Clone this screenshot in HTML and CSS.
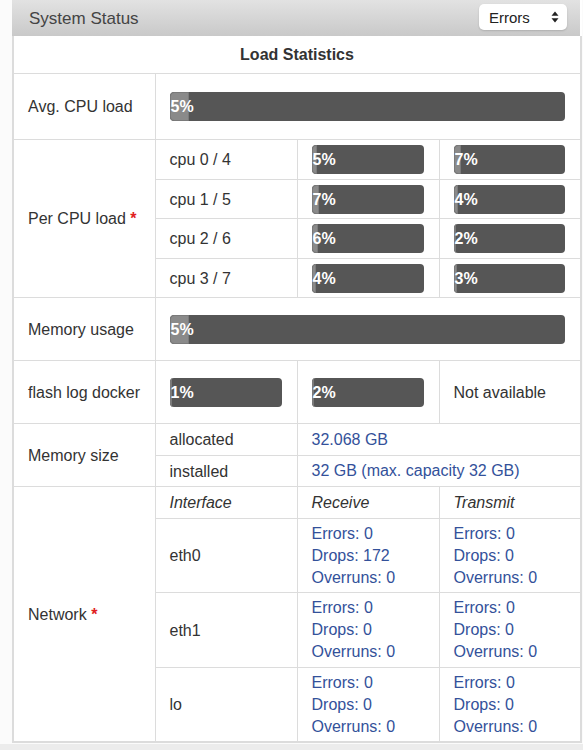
FILE: index.html
```html
<!DOCTYPE html>
<html lang="en">
<head>
    <meta charset="UTF-8">
    <meta name="viewport" content="width=device-width, initial-scale=1.0">
    <title>System Status</title>
    <link rel="stylesheet" href="styles.css">
</head>
<body>
    <div class="page">
        <div class="panel">
            <div class="panel-head">
                <span class="panel-title">System Status</span>
                <div class="select">
                    <span>Errors</span>
                    <svg class="select-arrows" width="8" height="12" viewBox="0 0 8 12">
                        <path d="M4 0.5 L7.5 4.8 L0.5 4.8 Z" fill="#222"/>
                        <path d="M4 11.5 L7.5 7.2 L0.5 7.2 Z" fill="#222"/>
                    </svg>
                </div>
            </div>
            <table class="stats">
                <colgroup>
                    <col class="c1"><col class="c2"><col class="c3"><col class="c4">
                </colgroup>
                <tr>
                    <th colspan="4" class="title">Load Statistics</th>
                </tr>
                <tr>
                    <td class="label taller">Avg. CPU load</td>
                    <td colspan="3" class="bar-cell taller">
                        <div class="bar"><div class="fill" style="width:5%"></div><span>5%</span></div>
                    </td>
                </tr>
                <tr>
                    <td rowspan="4" class="label">Per CPU load <span class="req">*</span></td>
                    <td class="sub">cpu 0 / 4</td>
                    <td class="bar-cell"><div class="bar"><div class="fill" style="width:5%"></div><span>5%</span></div></td>
                    <td class="bar-cell"><div class="bar"><div class="fill" style="width:7%"></div><span>7%</span></div></td>
                </tr>
                <tr>
                    <td class="sub">cpu 1 / 5</td>
                    <td class="bar-cell"><div class="bar"><div class="fill" style="width:7%"></div><span>7%</span></div></td>
                    <td class="bar-cell"><div class="bar"><div class="fill" style="width:4%"></div><span>4%</span></div></td>
                </tr>
                <tr>
                    <td class="sub">cpu 2 / 6</td>
                    <td class="bar-cell"><div class="bar"><div class="fill" style="width:6%"></div><span>6%</span></div></td>
                    <td class="bar-cell"><div class="bar"><div class="fill" style="width:2%"></div><span>2%</span></div></td>
                </tr>
                <tr>
                    <td class="sub">cpu 3 / 7</td>
                    <td class="bar-cell"><div class="bar"><div class="fill" style="width:4%"></div><span>4%</span></div></td>
                    <td class="bar-cell"><div class="bar"><div class="fill" style="width:3%"></div><span>3%</span></div></td>
                </tr>
                <tr>
                    <td class="label tall">Memory usage</td>
                    <td colspan="3" class="bar-cell tall">
                        <div class="bar"><div class="fill" style="width:5%"></div><span>5%</span></div>
                    </td>
                </tr>
                <tr>
                    <td class="label tall">flash log docker</td>
                    <td class="bar-cell tall"><div class="bar"><div class="fill" style="width:1%"></div><span>1%</span></div></td>
                    <td class="bar-cell tall"><div class="bar"><div class="fill" style="width:2%"></div><span>2%</span></div></td>
                    <td class="sub">Not available</td>
                </tr>
                <tr>
                    <td rowspan="2" class="label">Memory size</td>
                    <td class="sub">allocated</td>
                    <td colspan="2" class="sub link">32.068 GB</td>
                </tr>
                <tr>
                    <td class="sub">installed</td>
                    <td colspan="2" class="sub link">32 GB (max. capacity 32 GB)</td>
                </tr>
                <tr>
                    <td rowspan="4" class="label">Network <span class="req">*</span></td>
                    <td class="sub head">Interface</td>
                    <td class="sub head">Receive</td>
                    <td class="sub head">Transmit</td>
                </tr>
                <tr>
                    <td class="sub">eth0</td>
                    <td class="sub link">Errors: 0<br>Drops: 172<br>Overruns: 0</td>
                    <td class="sub link">Errors: 0<br>Drops: 0<br>Overruns: 0</td>
                </tr>
                <tr>
                    <td class="sub">eth1</td>
                    <td class="sub link">Errors: 0<br>Drops: 0<br>Overruns: 0</td>
                    <td class="sub link">Errors: 0<br>Drops: 0<br>Overruns: 0</td>
                </tr>
                <tr>
                    <td class="sub">lo</td>
                    <td class="sub link">Errors: 0<br>Drops: 0<br>Overruns: 0</td>
                    <td class="sub link">Errors: 0<br>Drops: 0<br>Overruns: 0</td>
                </tr>
            </table>
        </div>
    </div>
    <div class="foot"></div>
</body>
</html>
```

FILE: styles.css
```css
body {
    font-family: 'Liberation Sans', Arial, sans-serif;
    font-size: 16px;
    color: #333;
    background-color: #fbfbfb;
    margin: 0;
    padding: 0;
}
.page {
    padding-left: 12px;
    padding-right: 1px;
}
.panel {
    background-color: #ffffff;
}
.panel-head {
    display: flex;
    align-items: center;
    justify-content: space-between;
    height: 36px;
    padding: 0 13px 0 17px;
    margin-right: 2px;
    background: linear-gradient(#e2e2e2, #c9c9c9);
}
.panel-title {
    font-size: 17px;
    color: #444;
    padding-top: 1px;
}
.select {
    display: flex;
    align-items: center;
    justify-content: space-between;
    width: 88px;
    height: 26px;
    box-sizing: border-box;
    padding: 0 8px 0 10px;
    margin-top: -2px;
    background-color: #fff;
    border-radius: 5px;
    box-shadow: 0 1px 2px rgba(0, 0, 0, 0.15);
    font-size: 15px;
    color: #222;
}
.stats {
    width: 100%;
    border-collapse: collapse;
    table-layout: fixed;
    border: 2px solid #dcdcdc;
    border-top: none;
}
.stats col {
    width: 25%;
}
.stats td,
.stats th {
    border: 1px solid #dcdcdc;
    padding: 5px 14px;
    line-height: 21px;
    text-align: left;
    vertical-align: middle;
}
.stats th.title {
    text-align: center;
    font-weight: bold;
    height: 27px;
    border-top: none;
}
.stats td.sub {
    padding-bottom: 4.5px;
}
.label {
    padding-left: 13px;
}
.tall {
    height: 52px;
}
.taller {
    height: 55px;
}
.stats td.bar-cell {
    height: 29px;
    padding-right: 15px;
    padding-bottom: 4.5px;
}
.stats td.bar-cell.tall {
    height: 52px;
}
.stats td.bar-cell.taller {
    height: 55px;
}
.stats td.sub.link {
    color: #33519a;
    line-height: 22px;
    padding-top: 4px;
    padding-bottom: 3.5px;
}
.head {
    font-style: italic;
}
.req {
    color: #e02020;
    font-weight: bold;
}
.bar {
    position: relative;
    height: 29px;
    background-color: #565656;
    border-radius: 4px;
    overflow: hidden;
}
.fill {
    height: 100%;
    background-color: #8a8a8a;
    border-radius: 4px 0 0 4px;
    border: 1px solid #7a7a7a;
    box-sizing: border-box;
}
.bar span {
    position: absolute;
    left: 1px;
    top: 0;
    line-height: 29px;
    color: #fff;
    font-weight: bold;
    font-size: 16px;
}
.foot {
    height: 12px;
    margin-top: 1px;
    background-color: #ececec;
}
```
